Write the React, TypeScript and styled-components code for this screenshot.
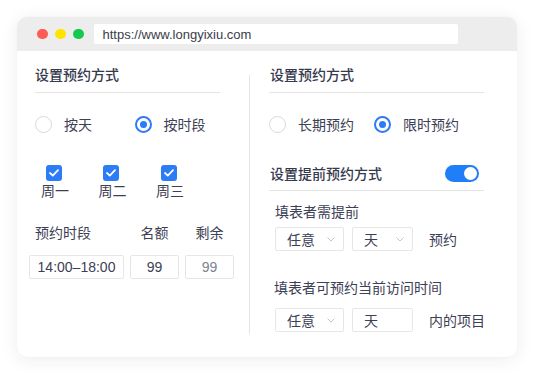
import React from "react";
import styled, { createGlobalStyle } from "styled-components";

const Global = createGlobalStyle`
  html, body { margin: 0; padding: 0; background: #ffffff; }
  body { font-family: "Noto Sans CJK SC", "Liberation Sans", sans-serif; color: #3c4054; }
  * { box-sizing: border-box; }
`;

const Page = styled.div`
  width: 534px;
  height: 374px;
  padding: 17px;
`;

const Card = styled.div`
  width: 500px;
  height: 340px;
  border-radius: 10px;
  background: #ffffff;
  box-shadow: 0 3px 18px rgba(30, 40, 70, 0.08), 0 0 2px rgba(30, 40, 70, 0.04);
  overflow: hidden;
  display: flex;
  flex-direction: column;
`;

const TitleBar = styled.div`
  height: 34px;
  background: #ededed;
  display: flex;
  align-items: center;
  padding-left: 20px;
  gap: 7.5px;
`;

const Dot = styled.span<{ $c: string }>`
  width: 10.5px;
  height: 10.5px;
  border-radius: 50%;
  background: ${(p) => p.$c};
`;

const UrlBar = styled.div`
  margin-left: 2.5px;
  width: 364px;
  height: 20px;
  background: #ffffff;
  border-radius: 2px;
  display: flex;
  align-items: center;
  padding-left: 9px;
  font-family: "Liberation Sans", "Noto Sans", sans-serif;
  font-size: 13px;
  color: #3a3d48;
`;

const Body = styled.div`
  flex: 1;
  display: flex;
  padding: 13px 0 0 18px;
`;

const Column = styled.div<{ $w: number }>`
  width: ${(p) => p.$w}px;
  display: flex;
  flex-direction: column;
`;

const VDivider = styled.div`
  width: 1px;
  height: 259px;
  margin: 11px 19px 0 29px;
  background: #e6e6e6;
`;

const Heading = styled.div<{ $pl?: number }>`
  font-size: 14px;
  line-height: 20px;
  font-weight: 500;
  color: #353a4d;
  padding: 0 0 8px ${(p) => p.$pl ?? 0}px;
  border-bottom: 1px solid #e4e4e4;
`;

const RadioRow = styled.div<{ $gap: number }>`
  display: flex;
  align-items: center;
  gap: ${(p) => p.$gap}px;
  margin-top: 22.5px;
  height: 17px;
`;

const RadioItem = styled.label`
  display: flex;
  align-items: center;
  gap: 12px;
  font-size: 14px;
  line-height: 20px;
  white-space: nowrap;
`;

const RadioCircle = styled.span<{ $on?: boolean }>`
  width: 17px;
  height: 17px;
  border-radius: 50%;
  border: ${(p) => (p.$on ? "2px solid #2b7cf6" : "1px solid #d9d9d9")};
  background: #fff;
  display: flex;
  align-items: center;
  justify-content: center;
  &::after {
    content: "";
    display: ${(p) => (p.$on ? "block" : "none")};
    width: 7px;
    height: 7px;
    border-radius: 50%;
    background: #2b7cf6;
  }
`;

const CheckRow = styled.div`
  display: flex;
  gap: 29.5px;
  margin: 32px 0 0 6px;
`;

const CheckItem = styled.div`
  width: 28px;
  display: flex;
  flex-direction: column;
  align-items: center;
`;

const CheckBox = styled.span`
  width: 16px;
  height: 16px;
  border-radius: 3px;
  background: #2b7cf6;
  display: flex;
  align-items: center;
  justify-content: center;
  margin-left: -3px;
`;

const CheckLabel = styled.span`
  font-size: 14px;
  line-height: 18px;
  white-space: nowrap;
`;

const TableGrid = styled.div<{ $mt: number }>`
  display: grid;
  grid-template-columns: 95px 49px 49px;
  column-gap: 6px;
  margin: ${(p) => p.$mt}px 0 0 -6px;
`;

const HeadCell = styled.div<{ $left?: boolean }>`
  font-size: 14px;
  line-height: 20px;
  text-align: ${(p) => (p.$left ? "left" : "center")};
  padding-left: ${(p) => (p.$left ? 6 : 0)}px;
  white-space: nowrap;
`;

const Box = styled.div<{ $muted?: boolean }>`
  height: 24px;
  border: 1px solid #e6e6e6;
  border-radius: 2px;
  display: flex;
  align-items: center;
  justify-content: center;
  font-family: "Liberation Sans", "Noto Sans", sans-serif;
  font-size: 14px;
  color: ${(p) => (p.$muted ? "#7d8293" : "#3c4054")};
  white-space: nowrap;
`;

const SectionHead = styled.div`
  display: flex;
  align-items: center;
  justify-content: space-between;
  margin-top: 31.5px;
  padding: 0 5px 8px 1px;
  border-bottom: 1px solid #e4e4e4;
`;

const SectionTitle = styled.span`
  font-size: 14px;
  line-height: 18px;
  font-weight: 500;
  color: #353a4d;
`;

const Toggle = styled.span`
  width: 34px;
  height: 17px;
  border-radius: 9px;
  background: #1f7ef8;
  display: flex;
  align-items: center;
  justify-content: flex-end;
  padding-right: 2px;
  &::after {
    content: "";
    width: 13px;
    height: 13px;
    border-radius: 50%;
    background: #fff;
  }
`;

const SubLabel = styled.div<{ $mt: number; $pl: number }>`
  font-size: 14px;
  line-height: 20px;
  margin-top: ${(p) => p.$mt}px;
  padding-left: ${(p) => p.$pl}px;
  white-space: nowrap;
`;

const SelectRow = styled.div<{ $mt: number }>`
  display: flex;
  align-items: center;
  gap: 8px;
  margin: ${(p) => p.$mt}px 0 0 6px;
`;

const Select = styled.div<{ $w: number }>`
  width: ${(p) => p.$w}px;
  flex-shrink: 0;
  height: 24px;
  border: 1px solid #e6e6e6;
  border-radius: 2px;
  display: flex;
  align-items: center;
  justify-content: space-between;
  padding: 0 8px 0 11px;
  font-size: 14px;
  color: #3c4054;
`;

const Suffix = styled.span`
  font-size: 14px;
  line-height: 20px;
  margin-left: 8px;
  white-space: nowrap;
`;

const Chevron = () => (
  <svg width="8" height="5" viewBox="0 0 8 5">
    <polyline points="0.5,0.5 4,4 7.5,0.5" fill="none" stroke="#c4c6cc" strokeWidth="1" />
  </svg>
);

const Tick = () => (
  <svg width="10" height="8" viewBox="0 0 10 8">
    <polyline points="1,4 3.8,6.6 9,1.2" fill="none" stroke="#fff" strokeWidth="1.8" strokeLinecap="round" strokeLinejoin="round" />
  </svg>
);

export default function App() {
  return (
    <>
      <Global />
      <Page>
        <Card>
          <TitleBar>
            <Dot $c="#fe5b55" />
            <Dot $c="#ffe400" />
            <Dot $c="#14c94d" />
            <UrlBar>https://www.longyixiu.com</UrlBar>
          </TitleBar>
          <Body>
            <Column $w={185}>
              <Heading>设置预约方式</Heading>
              <RadioRow $gap={42.5}>
                <RadioItem>
                  <RadioCircle />
                  按天
                </RadioItem>
                <RadioItem>
                  <RadioCircle $on />
                  按时段
                </RadioItem>
              </RadioRow>
              <CheckRow>
                {["周一", "周二", "周三"].map((d) => (
                  <CheckItem key={d}>
                    <CheckBox>
                      <Tick />
                    </CheckBox>
                    <CheckLabel>{d}</CheckLabel>
                  </CheckItem>
                ))}
              </CheckRow>
              <TableGrid $mt={23}>
                <HeadCell $left>预约时段</HeadCell>
                <HeadCell>名额</HeadCell>
                <HeadCell>剩余</HeadCell>
              </TableGrid>
              <TableGrid $mt={13.5}>
                <Box>14:00–18:00</Box>
                <Box>99</Box>
                <Box $muted>99</Box>
              </TableGrid>
            </Column>
            <VDivider />
            <Column $w={215}>
              <Heading $pl={1}>设置预约方式</Heading>
              <RadioRow $gap={20}>
                <RadioItem>
                  <RadioCircle />
                  长期预约
                </RadioItem>
                <RadioItem>
                  <RadioCircle $on />
                  限时预约
                </RadioItem>
              </RadioRow>
              <SectionHead>
                <SectionTitle>设置提前预约方式</SectionTitle>
                <Toggle />
              </SectionHead>
              <SubLabel $mt={10} $pl={6}>填表者需提前</SubLabel>
              <SelectRow $mt={6}>
                <Select $w={69}>
                  任意
                  <Chevron />
                </Select>
                <Select $w={61}>
                  天
                  <Chevron />
                </Select>
                <Suffix>预约</Suffix>
              </SelectRow>
              <SubLabel $mt={26} $pl={5}>填表者可预约当前访问时间</SubLabel>
              <SelectRow $mt={11}>
                <Select $w={69}>
                  任意
                  <Chevron />
                </Select>
                <Select $w={61}>天</Select>
                <Suffix>内的项目</Suffix>
              </SelectRow>
            </Column>
          </Body>
        </Card>
      </Page>
    </>
  );
}
